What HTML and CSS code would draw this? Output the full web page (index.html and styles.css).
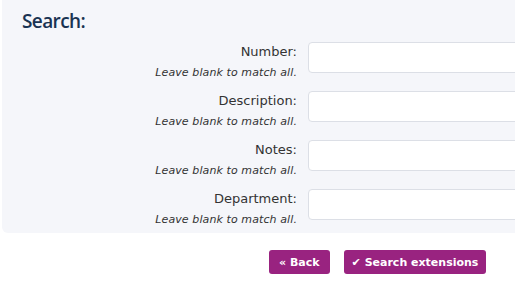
FILE: index.html
```html
<!DOCTYPE html>
<html lang="en">
<head>
  <meta charset="UTF-8" />
  <title>Search extensions</title>
  <link rel="stylesheet" href="styles.css">
</head>
<body>
  <form class="panel">
    <h2>Search:</h2>

    <div class="row">
      <div class="lbl">
        <label for="number">Number:</label>
        <small>Leave blank to match all.</small>
      </div>
      <input type="text" id="number" />
    </div>

    <div class="row">
      <div class="lbl">
        <label for="description">Description:</label>
        <small>Leave blank to match all.</small>
      </div>
      <input type="text" id="description" />
    </div>

    <div class="row">
      <div class="lbl">
        <label for="notes">Notes:</label>
        <small>Leave blank to match all.</small>
      </div>
      <input type="text" id="notes" />
    </div>

    <div class="row">
      <div class="lbl">
        <label for="department">Department:</label>
        <small>Leave blank to match all.</small>
      </div>
      <input type="text" id="department" />
    </div>
  </form>

  <div class="actions">
    <button class="btn back">&laquo; Back</button>
    <button class="btn"><span class="tick">&#10004;</span> Search extensions</button>
  </div>
</body>
</html>
```

FILE: styles.css
```css
*,*::before,*::after{box-sizing:border-box;margin:0;padding:0}
body{font-family:'DejaVu Sans',Verdana,sans-serif;color:#333;background:#fff;padding:0 0 0 2px;width:600px;overflow:hidden}
.panel{background:#f5f6fa;border-radius:0 0 6px 6px;padding:9px 0 6px 20px;display:flex;flex-direction:column;gap:11px}
h2{font-family:'Open Sans',sans-serif;font-size:19px;font-weight:600;color:#1a3352;line-height:24px;margin-bottom:-2px;letter-spacing:-.6px}
.row{display:flex;gap:11px;align-items:flex-start}
.lbl{width:275px;flex-shrink:0;display:flex;flex-direction:column;align-items:flex-end;padding-top:2px}
.lbl label{font-size:13px;line-height:16px;color:#333}
.lbl small{font-size:11px;font-style:italic;line-height:14px;margin-top:6px;color:#333;letter-spacing:.1px}
input[type=text]{width:300px;height:31px;border:1px solid #dcdfe6;border-radius:4px;background:#fff}
.actions{display:flex;gap:14px;padding:17px 0 0 267px}
.btn{background:#992380;color:#fff;border:none;border-radius:3px;height:24px;padding:0 8px;font-family:inherit;font-size:11px;font-weight:bold}
.btn.back{padding:0 10px}
.tick{font-size:11px}
```
